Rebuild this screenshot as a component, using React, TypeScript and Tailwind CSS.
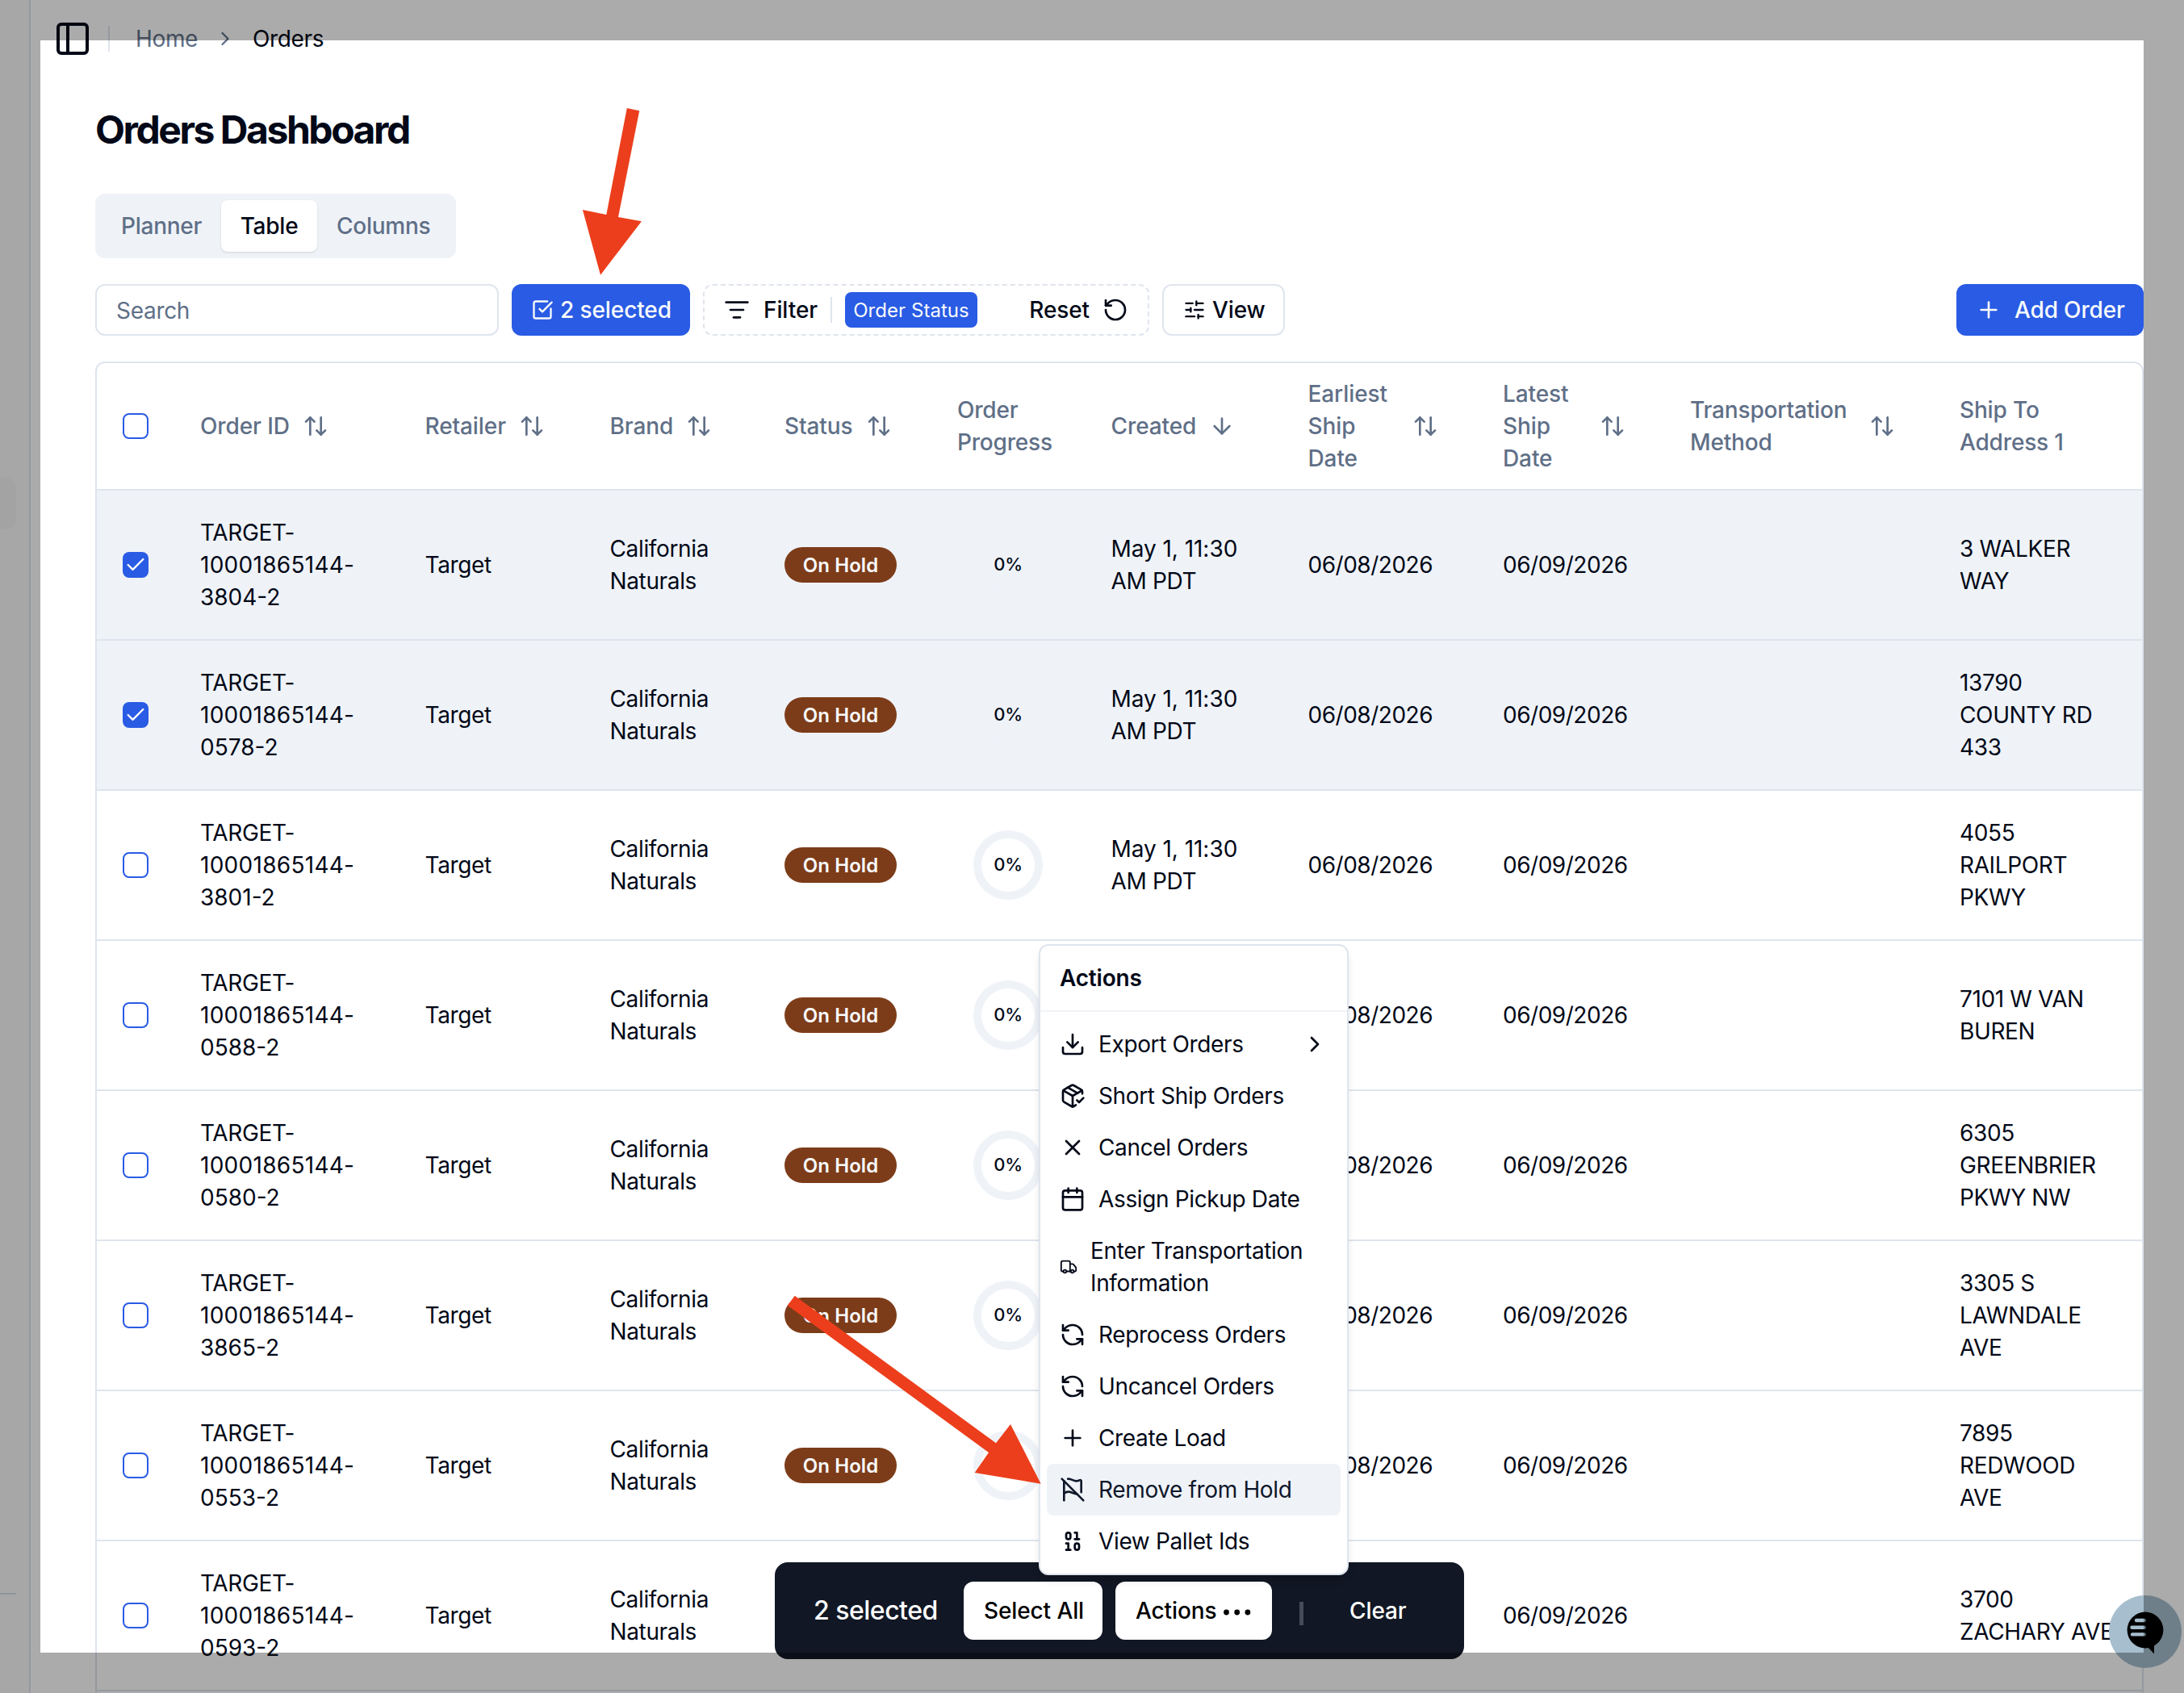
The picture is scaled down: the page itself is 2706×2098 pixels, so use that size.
import React from "react";
import {
  ArrowDown,
  ArrowUpDown,
  Binary,
  Calendar,
  Check,
  ChevronRight,
  Download,
  FlagOff,
  ListFilter,
  PackageCheck,
  PanelLeft,
  Plus,
  RefreshCcw,
  RotateCcw,
  SlidersHorizontal,
  SquareCheckBig,
  Truck,
  X,
} from "lucide-react";

const columns =
  "grid grid-cols-[96px_278.5px_229px_216.5px_214px_190.5px_244px_241.5px_232px_334px_1fr] items-center";

const orders = [
  { id: "3804-2", address: "3 WALKER\nWAY", selected: true },
  { id: "0578-2", address: "13790\nCOUNTY RD\n433", selected: true },
  { id: "3801-2", address: "4055\nRAILPORT\nPKWY", selected: false },
  { id: "0588-2", address: "7101 W VAN\nBUREN", selected: false },
  { id: "0580-2", address: "6305\nGREENBRIER\nPKWY NW", selected: false },
  { id: "3865-2", address: "3305 S\nLAWNDALE\nAVE", selected: false },
  { id: "0553-2", address: "7895\nREDWOOD\nAVE", selected: false },
  { id: "0593-2", address: "3700\nZACHARY AVE", selected: false },
];

function Checkbox({ checked = false }: { checked?: boolean }) {
  return checked ? (
    <div className="flex size-8 items-center justify-center rounded-lg bg-[#295be4] text-white">
      <Check className="size-7" strokeWidth={2} />
    </div>
  ) : (
    <div className="size-8 rounded-lg border-2 border-[#295be4] bg-white" />
  );
}

function HeadCell({
  label,
  labelClass = "",
  sort = "both",
}: {
  label: string;
  labelClass?: string;
  sort?: "both" | "down" | "none";
}) {
  return (
    <div className="flex items-center gap-4 pl-8">
      <span className={"whitespace-pre-line " + labelClass}>{label}</span>
      {sort === "both" && <ArrowUpDown className="size-8 shrink-0" />}
      {sort === "down" && <ArrowDown className="size-8 shrink-0" />}
    </div>
  );
}

function Cell({ children }: { children?: React.ReactNode }) {
  return <div className="whitespace-pre-line pl-8">{children}</div>;
}

function Progress() {
  return (
    <div className="ml-[52px] flex size-[86px] items-center justify-center rounded-full border-[10px] border-[#eff3f8]">
      <span className="-mt-[2px] text-[22px] leading-[30px] font-medium">0%</span>
    </div>
  );
}

const menu = [
  { icon: Download, label: "Export Orders", submenu: true },
  { icon: PackageCheck, label: "Short Ship Orders" },
  { icon: X, label: "Cancel Orders" },
  { icon: Calendar, label: "Assign Pickup Date" },
  { icon: Truck, label: "Enter Transportation\nInformation", small: true },
  { icon: RefreshCcw, label: "Reprocess Orders" },
  { icon: RefreshCcw, label: "Uncancel Orders" },
  { icon: Plus, label: "Create Load" },
  { icon: FlagOff, label: "Remove from Hold", active: true },
  { icon: Binary, label: "View Pallet Ids" },
];

function ActionsMenu() {
  return (
    <div className="absolute top-[1170px] left-[1287px] z-20 flex w-[384px] flex-col rounded-xl border-2 border-[#dfe5ee] bg-white p-2 shadow-[0_8px_12px_-2px_rgba(0,0,0,0.1),0_4px_8px_-4px_rgba(0,0,0,0.1)]">
      <div className="px-4 py-3 font-semibold tracking-[-0.2px]">Actions</div>
      <div className="-mx-2 my-2 h-0.5 bg-[#eff3f8]" />
      {menu.map(({ icon: Icon, label, submenu, small, active }) => (
        <div
          key={label}
          className={
            "flex items-center gap-4 rounded-lg px-4 py-3 whitespace-pre-line " +
            (active ? "bg-[#eff3f8] text-[#0f172a]" : "")
          }
        >
          <Icon className={small ? "h-8 w-[22px] shrink-0" : "size-8 shrink-0"} />
          <span className="flex-1">{label}</span>
          {submenu && <ChevronRight className="size-8 shrink-0" />}
        </div>
      ))}
    </div>
  );
}

function SelectionBar() {
  return (
    <div className="absolute top-[1936px] left-[960px] z-10 flex h-[120px] w-[854px] items-center rounded-2xl bg-[#111724] pl-12 tracking-[-0.1px] text-white">
      <span className="w-[186px] text-[32px] leading-10 font-medium tracking-[-0.5px]">2 selected</span>
      <div className="flex h-[72px] w-[172px] items-center justify-center rounded-xl bg-white pl-0.5 font-medium text-black">
        Select All
      </div>
      <div className="ml-4 flex h-[72px] w-[194px] items-center rounded-xl bg-white pl-[25px] font-medium text-black">
        <span className="w-[109px]">Actions</span>
        <svg className="mt-1 h-2 w-9" viewBox="0 0 36 8" fill="currentColor">
          <circle cx="3.5" cy="4" r="3.4" />
          <circle cx="16.7" cy="4" r="3.4" />
          <circle cx="29.9" cy="4" r="3.4" />
        </svg>
      </div>
      <div className="mt-[7px] ml-[34px] h-[29px] w-[5px] bg-[#454b58]" />
      <span className="ml-[57px] font-medium">Clear</span>
    </div>
  );
}

function ChatBubble() {
  return (
    <div className="absolute top-[1977px] left-[2613px] z-10 size-[90px] rounded-full bg-[#a6bece]">
      <svg viewBox="0 0 90 90" className="size-full">
        <circle cx="45" cy="43" r="22.4" fill="#000" />
        <path d="M47 63 L56 72.4 V58 Z" fill="#000" />
        <path
          d="M34 31h9.5M28.5 39.7h15M29 48.4h14.5"
          stroke="#a6bece"
          strokeWidth="4.4"
          strokeLinecap="round"
        />
      </svg>
    </div>
  );
}

export default function App() {
  return (
    <div className="relative flex h-[2098px] w-[2706px] overflow-hidden bg-white font-[Inter,sans-serif] text-[28px] leading-10 tracking-[-0.36px] text-[#020817]">
      <aside className="flex w-[38px] shrink-0 flex-col border-r-2 border-[#dfe5ee] bg-[#fafafa]">
        <div className="mt-[592px] h-16 w-5 rounded-r-xl bg-[#f3f3f4]" />
        <div className="mt-[1318px] h-0.5 w-5 bg-[#d5dbe3]" />
      </aside>

      <main className="flex min-w-0 flex-1 flex-col">
        <header className="flex h-24 shrink-0 items-center pl-7">
          <PanelLeft className="size-12" />
          <div className="ml-5 h-8 w-0.5 bg-[#dfe5ee]" />
          <nav className="ml-8 flex items-center gap-5">
            <span className="text-[#5f6f87]">Home</span>
            <ChevronRight className="size-7 text-[#5f6f87]" />
            <span>Orders</span>
          </nav>
        </header>

        <section className="mt-[33px] mr-[50px] ml-20 flex flex-1 flex-col">
          <h1 className="text-[48px] leading-[64px] font-bold tracking-[-2.45px]">Orders Dashboard</h1>

          <div className="mt-[47px] flex h-20 w-[447px] rounded-xl bg-[#eff3f8] p-2 font-medium tracking-[-0.25px] text-[#5f6f87]">
            <div className="w-[148px] py-3 pl-6">Planner</div>
            <div className="w-[119px] rounded-lg bg-white py-3 text-center text-[#020817] shadow-sm">Table</div>
            <div className="py-3 pl-6">Columns</div>
          </div>

          <div className="mt-8 flex h-16 shrink-0 gap-4 font-medium tracking-[-0.1px]">
            <div className="flex w-[500px] items-center rounded-xl border-2 border-[#dfe5ee] px-6 pt-px font-normal tracking-[-0.3px] text-[#5f6f87]">
              Search
            </div>
            <div className="flex w-[221px] items-center gap-2 rounded-xl bg-[#295be4] px-6 whitespace-nowrap text-[#f8fafc]">
              <SquareCheckBig className="size-7 shrink-0" />
              2 selected
            </div>
            <div className="flex w-[553px] items-center rounded-xl border-2 border-dashed border-[#dfe5ee] px-6">
              <ListFilter className="size-8" />
              <span className="ml-[17px] w-[83px]">Filter</span>
              <div className="h-8 w-0.5 bg-[#dfe5ee]" />
              <div className="ml-4 flex h-11 w-[164px] items-center justify-center rounded-lg bg-[#295be4] pt-0.5 text-[24px] leading-8 font-normal tracking-[0.05px] whitespace-nowrap text-[#f8fafc]">
                Order Status
              </div>
              <span className="ml-auto">Reset</span>
              <RotateCcw className="ml-4 size-8" />
            </div>
            <div className="flex w-[152px] items-center gap-2 rounded-xl border-2 border-[#dfe5ee] px-6">
              <SlidersHorizontal className="size-7 shrink-0" />
              View
            </div>
            <div className="ml-auto flex w-[232px] items-center gap-4 rounded-xl bg-[#295be4] px-6 tracking-[-0.15px] whitespace-nowrap text-[#f8fafc]">
              <Plus className="size-8 shrink-0" />
              Add Order
            </div>
          </div>

          <div className="mt-8 h-[1700px] overflow-hidden rounded-t-xl border-2 border-[#dfe5ee]">
            <div
              className={
                columns + " h-[158px] border-b-2 border-[#dfe5ee] font-medium tracking-[-0.1px] text-[#5f6f87]"
              }
            >
              <div className="pl-8">
                <Checkbox />
              </div>
              <HeadCell label="Order ID" />
              <HeadCell label="Retailer" />
              <HeadCell label="Brand" />
              <HeadCell label="Status" />
              <HeadCell label={"Order\nProgress"} labelClass="tracking-[-0.2px]" sort="none" />
              <HeadCell label="Created" sort="down" />
              <HeadCell label={"Earliest\nShip\nDate"} labelClass="w-[113px]" />
              <HeadCell label={"Latest\nShip\nDate"} labelClass="w-[104px]" />
              <HeadCell label={"Transportation\nMethod"} labelClass="w-[206px] tracking-[-0.16px]" />
              <HeadCell label={"Ship To\nAddress 1"} labelClass="tracking-[-0.16px]" sort="none" />
            </div>
            {orders.map((order) => (
              <div
                key={order.id}
                className={
                  columns +
                  " h-[186px] border-b-2 border-[#dfe5ee] " +
                  (order.selected ? "bg-[#eff3f8]" : "bg-white")
                }
              >
                <div className="pl-8">
                  <Checkbox checked={order.selected} />
                </div>
                <Cell>
                  <div>TARGET-</div>
                  <div className="tracking-[0.28px]">10001865144-</div>
                  <div className="tracking-normal">{order.id}</div>
                </Cell>
                <Cell>Target</Cell>
                <Cell>{"California\nNaturals"}</Cell>
                <Cell>
                  <div className="flex h-11 w-[139px] items-center justify-center rounded-full bg-[#7d3c19] pt-0.5 text-[24px] leading-8 font-semibold tracking-[0.1px] text-[#f8fafc]">
                    On Hold
                  </div>
                </Cell>
                <Progress />
                <Cell>
                  <div className="tracking-[-0.05px]">May 1, 11:30</div>
                  <div>AM PDT</div>
                </Cell>
                <Cell>
                  <div className="tracking-[-0.48px]">06/08/2026</div>
                </Cell>
                <Cell>
                  <div className="tracking-[-0.48px]">06/09/2026</div>
                </Cell>
                <Cell />
                <Cell>{order.address}</Cell>
              </div>
            ))}
          </div>
        </section>
      </main>

      <SelectionBar />
      <ActionsMenu />
      <ChatBubble />

      {/* Dimmed frame around the highlighted area */}
      <div className="absolute inset-0 z-30 border-[50px] border-black/33" />

      {/* Callout arrows */}
      <svg className="absolute inset-0 z-40 size-full" viewBox="0 0 2706 2098" fill="#ec3e1c">
        <path d="M776.8 134 L792.2 137.3 L766 269 L794.9 274.3 L744 340.7 L721.9 260 L751.3 266 Z" />
        <path d="M984.7 1605.7 L1234 1788.3 L1252 1765 L1289.7 1838.7 L1207.7 1825 L1225 1800 L975.7 1617.7 Z" />
      </svg>
    </div>
  );
}
